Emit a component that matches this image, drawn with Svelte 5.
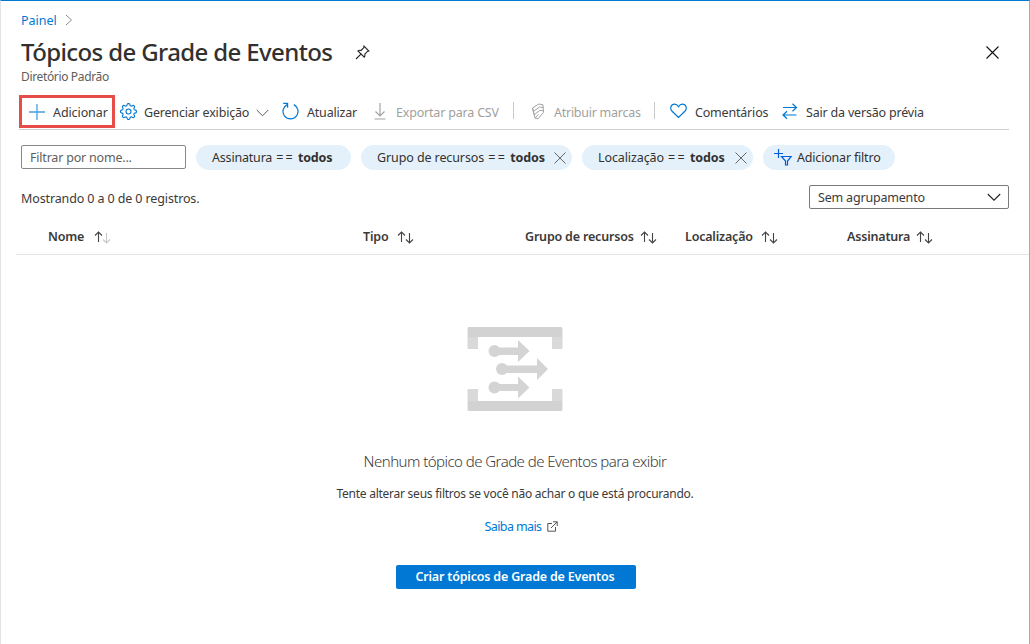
<script>
  const columns = [
    { name: 'Nome', cls: 'c1', faded: true },
    { name: 'Tipo', cls: 'c2' },
    { name: 'Grupo de recursos', cls: 'c3' },
    { name: 'Localização', cls: 'c4' },
    { name: 'Assinatura', cls: 'c5' }
  ];

  // Eight-toothed gear outline centred in a 17px box.
  const gear =
    'M' +
    Array.from({ length: 96 }, (_, i) => {
      const a = (i / 96) * Math.PI * 2;
      const r = 7 + 0.95 * Math.tanh(2.2 * Math.cos(8 * a));
      return `${(8.5 + r * Math.cos(a)).toFixed(2)} ${(8.5 + r * Math.sin(a)).toFixed(2)}`;
    }).join('L') +
    'Z';
</script>

<div class="blade">
  <nav class="crumb"><a href="#painel">Painel</a>
    <svg width="8" height="12" viewBox="0 0 8 12"><path d="M1 1l5.500 5L1 11" fill="none" stroke="#8a8a8a" /></svg>
  </nav>
  <header>
    <h1>Tópicos de Grade de Eventos</h1>
    <svg class="pin" width="15" height="15" viewBox="0 0 15 15" fill="none" stroke="#222" stroke-width="1.1"><path d="M9 1.2L13.800 6l-1.300.4-2.700 2.800c.4 1.200.2 2.200-.5 3L3 6c.8-.7 1.800-.9 3-.5l2.700-2.700zM5.900 9.200L1 14" /></svg>
    <svg class="close" width="13" height="13" viewBox="0 0 13 13" stroke="#111" stroke-width="1.100"><path d="M.5.5l12 12M12.500.5l-12 12" /></svg>
  </header>
  <div class="subtitle">Diretório Padrão</div>

  <div class="toolbar">
    <button class="cmd add">
      <svg width="16" height="16" viewBox="0 0 16 16" stroke="#4a9fe0" stroke-width="1.300"><path d="M8 0v16M0 8h16" /></svg>
      <span>Adicionar</span>
    </button>
    <button class="cmd manage">
      <svg width="17" height="17" viewBox="0 0 17 17" fill="none" stroke="#0078d4" stroke-width="1.100"><path d={gear} /><circle cx="8.500" cy="8.500" r="2.500" /></svg>
      <span>Gerenciar exibição</span>
      <svg class="chev" width="13" height="8" viewBox="0 0 13 8" fill="none" stroke="#555"><path d="M.7 1l5.800 5.800L12.300 1" /></svg>
    </button>
    <button class="cmd refresh">
      <svg width="17" height="18" viewBox="0 0 17 18" fill="none" stroke="#0078d4" stroke-width="1.200"><path d="M5.200 2.600A7.500 7.500 0 1 0 11.800 2.600M1.200 1.400h4.400v4.400" /></svg>
      <span>Atualizar</span>
    </button>
    <button class="cmd export" disabled>
      <svg width="12" height="17" viewBox="0 0 12 17" fill="none" stroke="#a3a3a3" stroke-width="1.200"><path d="M6 0v13M1.500 8.500L6 13l4.500-4.500M.5 16h11" /></svg>
      <span>Exportar para CSV</span>
    </button>
    <i class="sep"></i>
    <button class="cmd tags" disabled>
      <svg width="14" height="17" viewBox="0 0 14 17" fill="none" stroke="#a3a3a3" stroke-width="1"><path d="M1.500 5L8 1l4 .8.500 7.700L7 15.800l-3-.8zM1.500 5L2.300 8.500 8.500 4l3.800.6M2.300 8.500L3.200 11.800 8.800 7.300l3.500.5M4 15l3.500-3.500" /></svg>
      <span>Atribuir marcas</span>
    </button>
    <i class="sep second"></i>
    <button class="cmd feedback">
      <svg width="17" height="16" viewBox="0 0 17 16" fill="none" stroke="#0078d4" stroke-width="1.200"><path d="M8.500 14.500L1.900 8C-.4 5.500.9 1.200 4.600 1.200c1.900 0 3 1 3.900 2.500.9-1.500 2-2.500 3.900-2.500 3.700 0 5 4.300 2.700 6.800z" /></svg>
      <span>Comentários</span>
    </button>
    <button class="cmd leave">
      <svg width="16" height="17" viewBox="0 0 16 17" fill="none" stroke="#0078d4" stroke-width="1.200"><path d="M1 4.500h13.500M10.500.7l4 3.800-4 3.800M14.500 12H1M5 8.200L1 12l4 3.800" /></svg>
      <span>Sair da versão prévia</span>
    </button>
  </div>

  <div class="filters">
    <input placeholder="Filtrar por nome..." aria-label="Filtrar por nome" />
    <div class="pill p1"><span>Assinatura <i class="eq">==</i> <b>todos</b></span></div>
    <div class="pill p2"><span>Grupo de recursos <i class="eq">==</i> <b>todos</b></span>
      <svg width="12" height="12" viewBox="0 0 12 12" stroke="#666"><path d="M.5.5l11 11M11.500.5l-11 11" /></svg>
    </div>
    <div class="pill p3"><span>Localização <i class="eq">==</i> <b>todos</b></span>
      <svg width="12" height="12" viewBox="0 0 12 12" stroke="#666"><path d="M.5.5l11 11M11.500.5l-11 11" /></svg>
    </div>
    <div class="pill p4">
      <svg width="18" height="17" viewBox="0 0 18 17" fill="none" stroke="#015cda" stroke-width="1.200"><path d="M4.500 0v9M0 4.500h9M7.500 7.500h9.700L13.500 12v4h-2v-4z" /></svg>
      <span>Adicionar filtro</span>
    </div>
  </div>

  <div class="summary">
    <span class="count">Mostrando 0 a 0 de 0 registros.</span>
    <div class="select"><span>Sem agrupamento</span>
      <svg width="14" height="9" viewBox="0 0 14 9" fill="none" stroke="#222" stroke-width="1.100"><path d="M.8 1L7 7.200 13.200 1" /></svg>
    </div>
  </div>

  <div class="thead">
    {#each columns as col}
      <div class="th {col.cls}"><span>{col.name}</span>
        <svg width="18" height="13" viewBox="0 0 18 13" fill="none" stroke="#444" stroke-width="1.100"><path d="M4.500 11V1M1 4.500L4.500 1 8 4.500" /><path d="M12.500 2v10M9 8.500l3.500 3.500L16 8.500" stroke={col.faded ? '#c8c8c8' : '#444'} /></svg>
      </div>
    {/each}
  </div>

  <main>
    <svg class="art" width="96" height="86" viewBox="0 0 96 86">
      <path d="M2 1h92q1.500 0 1.500 1.500V22q0 1-1 1H85V11H11v12H1.500q-1 0-1-1V2.500Q.5 1 2 1zM1.500 63H11v12h74V63h9.500q1 0 1 1v19.500q0 1.500-1.500 1.500H2Q.5 85 .5 83.500V64q0-1 1-1z" fill="#d9d9d9" />
      <path d="M1 2.500Q1 1 2.500 1h91Q95 1 95 2.500V11H1zM1 75h94v8.500q0 1.500-1.500 1.500h-91Q1 85 1 83.500z" fill="#d2d2d2" />
      <g fill="#d4d4d4"><circle cx="27.500" cy="25" r="6" /><path d="M30 21.500h21V14l11.500 11L51 36v-7H30z" /><circle cx="35" cy="43" r="6" /><path d="M38 39.500h32V32l11 11-11 11v-7H38z" /><circle cx="27.500" cy="61.500" r="6" /><path d="M30 58h21v-7.500l11.500 11L51 72.500v-7.500H30z" /></g>
    </svg>
    <h2>Nenhum tópico de Grade de Eventos para exibir</h2>
    <p>Tente alterar seus filtros se você não achar o que está procurando.</p>
    <a class="learn" href="#saiba"><span>Saiba mais</span>
      <svg width="11" height="11" viewBox="0 0 11 11" fill="none" stroke="#555"><path d="M5 2.500H.8v7.700h7.700V6M6 .8h4.200V5M10.200.8L4 7" /></svg>
    </a>
    <button class="create"><span>Criar tópicos de Grade de Eventos</span></button>
  </main>
</div>

<style>
  :global(body) { margin: 0; background: #fff; }
  .blade { box-sizing: border-box; width: 1030px; height: 644px; overflow: hidden; border-top: 1px solid #0078d4; border-left: 1px solid #e4e4e4; border-right: 1px solid #aaa; font: 12.500px/18px "Noto Sans", sans-serif; letter-spacing: -.19px; color: #3b3a39; display: flex; flex-direction: column; }
  svg { flex: none; display: block; }
  span { white-space: nowrap; }
  button { border: 0; padding: 0; margin: 0; background: none; font: inherit; letter-spacing: inherit; color: inherit; }
  a { color: #0078d4; text-decoration: none; }
  .crumb { height: 18px; padding: 11px 0 0 20px; display: flex; align-items: center; gap: 8px; letter-spacing: 0; }
  .crumb svg { margin-top: -2px; }
  header { height: 36px; padding: 5px 29px 0 20px; display: flex; align-items: center; }
  h1 { margin: 0 0 2px; width: 334px; font-size: 24px; line-height: 36px; font-weight: 550; white-space: nowrap; letter-spacing: -.62px; color: #323130; }
  .close { margin-left: auto; margin-right: 1px; margin-top: -1px; }
  .pin { margin-top: -1px; }
  .subtitle { height: 25px; padding-left: 20px; font-size: 12px; line-height: 12px; letter-spacing: -.35px; color: #605e5c; }
  .toolbar { height: 34px; margin: -1px 20px 0 18px; display: flex; align-items: flex-start; border-bottom: 1px solid #d0d0d0; }
  .cmd { height: 33px; display: flex; align-items: center; flex: none; box-sizing: border-box; }
  .cmd span { padding-top: 2px; }
  .cmd[disabled] { color: #a19f9d; }
  .add { width: 96px; border: 3px solid #e84c48; padding-left: 7px; gap: 8px; letter-spacing: -.1px; }
  .manage { width: 167px; padding-left: 5px; gap: 7px; }
  .manage .chev { margin-left: auto; margin-right: 21px; margin-top: 2px; }
  .refresh { width: 92px; gap: 8px; }
  .refresh svg { margin-top: -2px; }
  .export { width: 139px; gap: 10px; }
  .sep { width: 1px; height: 17px; margin-top: 7px; background: #c8c8c8; flex: none; }
  .tags { width: 140px; padding-left: 17px; gap: 9px; letter-spacing: -.26px; }
  .feedback { width: 127px; padding-left: 15px; gap: 8px; }
  .leave { gap: 8px; }
  .leave svg, .feedback svg { margin-top: -1px; }
  .filters { display: flex; height: 25px; margin: 15px 0 0 20px; gap: 10px; }
  input { box-sizing: border-box; width: 165px; height: 24px; border: 1px solid #8a8886; border-radius: 2px; padding: 0 8px; font: inherit; letter-spacing: -.2px; background: #fff; }
  input::placeholder { color: #605e5c; opacity: 1; }
  .pill { box-sizing: border-box; height: 25px; border-radius: 13px; background: #e5f1fa; display: flex; align-items: center; padding-left: 16px; color: #323130; }
  .pill svg { margin-left: auto; margin-right: 6px; }
  .eq { font-style: normal; letter-spacing: 2.200px; margin-left: 1px; }
  .p1 { width: 155px; } .p2 { width: 211px; letter-spacing: -.1px; } .p3 { width: 171px; letter-spacing: -.1px; }
  .p4 { width: 132px; padding-left: 11px; gap: 5px; } .p4 svg { margin: 0; }
  .summary { display: flex; justify-content: space-between; height: 24px; margin: 15px 20px 0; align-items: center; }
  .count { padding-top: 3px; letter-spacing: -.12px; }
  .select { box-sizing: border-box; width: 200px; height: 24px; border: 1px solid #7a7a7a; border-radius: 2px; display: flex; align-items: center; justify-content: space-between; padding: 0 7px 0 8px; }
  .select span { padding-top: 1px; }
  .thead { height: 46px; margin-left: 15px; padding-left: 32px; border-bottom: 1px solid #e5e5e5; box-sizing: border-box; display: grid; grid-template-columns: 315px 162px 160px 162px 1fr; font-weight: 600; }
  .th { display: flex; align-items: center; gap: 8px; height: 56px; }
  .c1 { gap: 10px; }
  .c2 { gap: 9px; }
  .c3 { gap: 6px; }
  .c5 { gap: 6px; }
  main { display: flex; flex-direction: column; align-items: center; padding-top: 71px; }
  h2 { margin: 38px 0 0; font-size: 15px; line-height: 22px; font-weight: 350; white-space: nowrap; letter-spacing: -.54px; }
  p { margin: 13px 0 0; font-size: 12px; line-height: 18px; white-space: nowrap; letter-spacing: -.25px; }
  .learn { display: flex; align-items: center; gap: 6px; margin: 15px 0 0 13px; height: 18px; letter-spacing: -.6px; }
  .learn svg { margin-top: -2px; }
  .create { width: 240px; height: 24px; margin: 29px 0 0 2px; background: #0078d4; border-radius: 2px; color: #fff; font-weight: 600; }
  .create span { display: block; margin: 0 0 0 -2px; }
</style>
